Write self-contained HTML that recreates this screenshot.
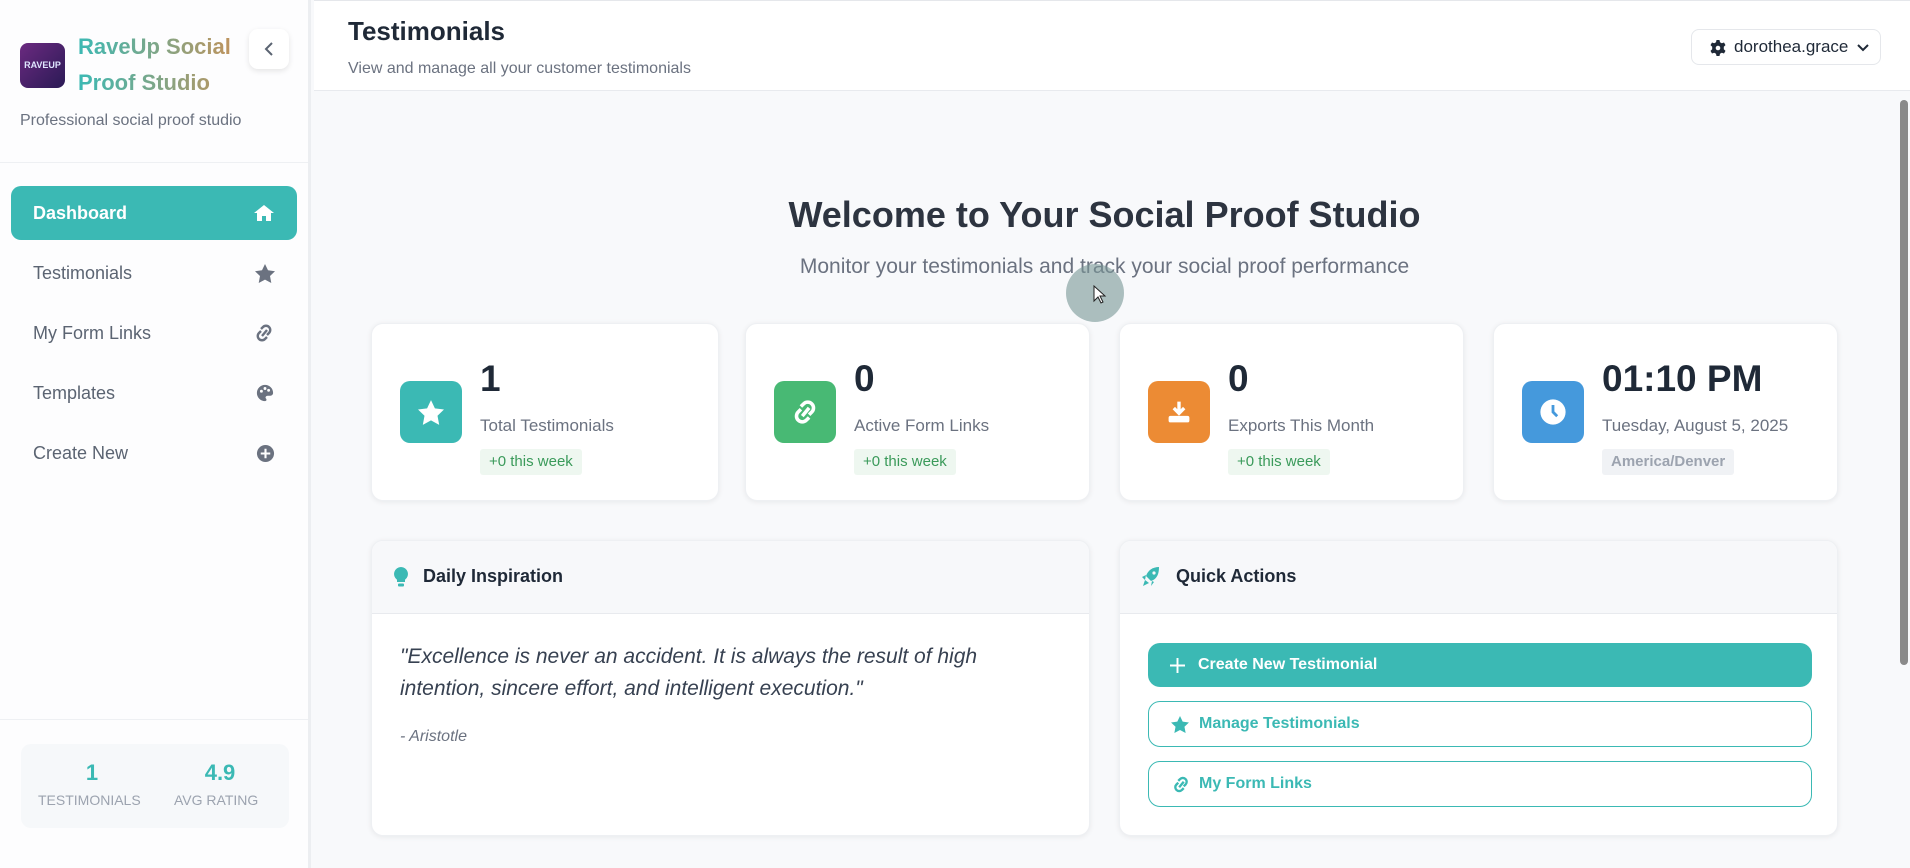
<!DOCTYPE html>
<html><head><meta charset="utf-8"><style>
*{box-sizing:border-box;margin:0;padding:0}
body{width:1910px;height:868px;overflow:hidden;background:#f8f9fb;font-family:"Liberation Sans",sans-serif;position:relative;color:#1f2937}
.a{position:absolute}
.side{left:0;top:0;width:311px;height:868px;background:#fdfdfe;border-right:3px solid #eceef1}
.nav{left:11px;width:286px;height:54px;border-radius:10px;font-size:18px;color:#5b6472;padding-left:22px;line-height:54px}
.nav svg{position:absolute;right:22px;top:18px}
.card{background:#fff;border-radius:12px;box-shadow:0 1px 6px rgba(0,0,0,.07);border:1px solid #eef0f3}
.ib{width:62px;height:62px;border-radius:10px;left:28px;top:57px;display:flex;align-items:center;justify-content:center}
.num{left:108px;top:34px;font-size:37px;font-weight:bold;color:#1f2937}
.lbl{left:108px;top:92px;font-size:17px;color:#6b7280}
.bdg{left:108px;top:125px;height:26px;line-height:26px;padding:0 9px;font-size:15px;color:#3a9a5a;background:#eef7f0;border-radius:3px}
.btn{left:28px;width:664px;border-radius:12px;font-size:16px;font-weight:bold;padding-left:50px;display:flex;align-items:center}
.btn svg{position:absolute;left:22px}
</style></head><body>
<div class="a side">
  <div class="a" style="left:20px;top:43px;width:45px;height:45px;border-radius:8px;background:linear-gradient(135deg,#6b2a80,#2a1a55);color:#dfe6ff;font-size:9px;font-weight:bold;text-align:center;line-height:45px">RAVEUP</div>
  <div class="a" style="left:78px;top:29px;font-size:22px;font-weight:bold;line-height:36px;background:linear-gradient(90deg,#3bb9b4,#c4925a);-webkit-background-clip:text;color:transparent;width:160px">RaveUp Social Proof Studio</div>
  <div class="a" style="left:249px;top:29px;width:40px;height:40px;border-radius:9px;background:#fff;box-shadow:0 2px 6px rgba(0,0,0,.1)"><svg class="a" style="left:13px;top:12px" width="14" height="16" viewBox="0 0 14 16"><path d="M10 2 4 8l6 6" stroke="#5b6472" stroke-width="2" fill="none"/></svg></div>
  <div class="a" style="left:20px;top:112px;font-size:16px;color:#6b7280">Professional social proof studio</div>
  <div class="a" style="left:0;top:162px;width:308px;border-top:1px solid #eef0f3"></div>
  <div class="a nav" style="top:186px;background:#3bb9b4;color:#fff;font-weight:bold"><span>Dashboard</span><svg width="22" height="18" viewBox="0 0 22 18"><path d="M11 1 1 9h3v8h5v-5h4v5h5V9h3z" fill="#fff"/></svg></div>
  <div class="a nav" style="top:246px">Testimonials<svg width="20" height="19" viewBox="0 0 20 19"><path d="M10 0l3 6.3 7 .9-5 4.8 1.3 7L10 15.6 3.7 19 5 12 0 7.2l7-.9z" fill="#6b7280"/></svg></div>
  <div class="a nav" style="top:306px">My Form Links<svg width="22" height="18" viewBox="0 0 22 18"><path d="M9 12l5-6M8 5l2-2a4 4 0 016 6l-2 2M14 13l-2 2a4 4 0 01-6-6l2-2" stroke="#6b7280" stroke-width="2.4" fill="none"/></svg></div>
  <div class="a nav" style="top:366px">Templates<svg width="20" height="18" viewBox="0 0 20 20"><path d="M10 1a9 9 0 000 18c2 0 2-2 1-3s0-3 2-3h3a3 3 0 003-3c0-5-4-9-9-9z" fill="#6b7280"/><circle cx="6" cy="8" r="1.6" fill="#fff"/><circle cx="10" cy="5" r="1.6" fill="#fff"/><circle cx="14" cy="7" r="1.6" fill="#fff"/></svg></div>
  <div class="a nav" style="top:426px">Create New<svg width="19" height="19" viewBox="0 0 20 20"><circle cx="10" cy="10" r="9" fill="#6b7280"/><path d="M10 5v10M5 10h10" stroke="#fff" stroke-width="2.2"/></svg></div>
  <div class="a" style="left:0;top:719px;width:308px;border-top:1px solid #eef0f3"></div>
  <div class="a" style="left:21px;top:744px;width:268px;height:84px;background:#f6f8fa;border-radius:10px"></div>
  <div class="a" style="left:40px;top:760px;width:104px;text-align:center;font-size:22px;font-weight:bold;color:#3bb9b4">1</div>
  <div class="a" style="left:38px;top:792px;font-size:14px;color:#9ca3af">TESTIMONIALS</div>
  <div class="a" style="left:170px;top:760px;width:100px;text-align:center;font-size:22px;font-weight:bold;color:#3bb9b4">4.9</div>
  <div class="a" style="left:174px;top:792px;font-size:14px;color:#9ca3af">AVG RATING</div>
</div>
<div class="a" style="left:314px;top:0;width:1596px;height:91px;background:#fff;border-bottom:1px solid #e8eaee;border-top:1px solid #e5e7eb"></div>
<div class="a" style="left:348px;top:16px;font-size:26px;font-weight:bold;color:#1f2937">Testimonials</div>
<div class="a" style="left:348px;top:60px;font-size:16px;color:#6b7280">View and manage all your customer testimonials</div>
<div class="a" style="left:1691px;top:29px;width:190px;height:36px;border:1px solid #e5e7eb;border-radius:8px;background:#fff;font-size:17px;line-height:34px;padding-left:42px;color:#1f2937">dorothea.grace
<svg class="a" style="left:18px;top:10px" width="16" height="16" viewBox="0 0 16 16"><path d="M6.5 0h3l.5 2.3 1.8 1 2.2-.8 1.5 2.6-1.7 1.6v2.6l1.7 1.6-1.5 2.6-2.2-.8-1.8 1-.5 2.3h-3L6 13.7l-1.8-1-2.2.8L.5 10.9l1.7-1.6V6.7L.5 5.1 2 2.5l2.2.8 1.8-1z" fill="#1f2937"/><circle cx="8" cy="8" r="2.3" fill="#fff"/></svg>
<svg class="a" style="left:164px;top:13px" width="14" height="10" viewBox="0 0 14 10"><path d="M2 2l5 5 5-5" stroke="#1f2937" stroke-width="2" fill="none"/></svg></div>
<div class="a" style="left:1900px;top:100px;width:8px;height:565px;background:#8a8a8a;border-radius:4px"></div>
<div class="a" style="left:371px;top:194px;width:1467px;text-align:center;font-size:36px;font-weight:bold;color:#2d3440">Welcome to Your Social Proof Studio</div>
<div class="a" style="left:371px;top:255px;width:1467px;text-align:center;font-size:21px;color:#6b7280">Monitor your testimonials and track your social proof performance</div>

<div class="a card" style="left:371px;top:323px;width:348px;height:178px">
 <div class="a ib" style="background:#3bb9b4"><svg width="26" height="25" viewBox="0 0 20 19"><path d="M10 0l3 6.3 7 .9-5 4.8 1.3 7L10 15.6 3.7 19 5 12 0 7.2l7-.9z" fill="#fff"/></svg></div>
 <div class="a num">1</div><div class="a lbl">Total Testimonials</div><div class="a bdg">+0 this week</div></div>
<div class="a card" style="left:745px;top:323px;width:345px;height:178px">
 <div class="a ib" style="background:#48b974"><svg width="30" height="26" viewBox="0 0 22 18"><path d="M9 12l5-6M8 5l2-2a4 4 0 016 6l-2 2M14 13l-2 2a4 4 0 01-6-6l2-2" stroke="#fff" stroke-width="2.6" fill="none"/></svg></div>
 <div class="a num">0</div><div class="a lbl">Active Form Links</div><div class="a bdg">+0 this week</div></div>
<div class="a card" style="left:1119px;top:323px;width:345px;height:178px">
 <div class="a ib" style="background:#ec8b34"><svg width="26" height="26" viewBox="0 0 20 20"><path d="M10 2v9M6 7l4 4 4-4" stroke="#fff" stroke-width="2.6" fill="none"/><rect x="2" y="13" width="16" height="5" rx="1.5" fill="#fff"/></svg></div>
 <div class="a num">0</div><div class="a lbl">Exports This Month</div><div class="a bdg">+0 this week</div></div>
<div class="a card" style="left:1493px;top:323px;width:345px;height:178px">
 <div class="a ib" style="background:#4599dc"><svg width="28" height="28" viewBox="0 0 20 20"><circle cx="10" cy="10" r="9" fill="#fff"/><path d="M10 5v5l3 3" stroke="#4599dc" stroke-width="2" fill="none"/></svg></div>
 <div class="a num">01:10 PM</div><div class="a lbl">Tuesday, August 5, 2025</div><div class="a bdg" style="color:#9ca3af;background:#f0f2f5;font-weight:bold">America/Denver</div></div>

<div class="a card" style="left:371px;top:540px;width:719px;height:296px;overflow:hidden">
 <div class="a" style="left:0;top:0;width:100%;height:73px;background:#f7f8fa;border-bottom:1px solid #e8eaee"></div>
 <svg class="a" style="left:22px;top:26px" width="14" height="21" viewBox="0 0 14 21"><path d="M7 0a7 7 0 00-4 12.7V15h8v-2.3A7 7 0 007 0z" fill="#3bb9b4"/><rect x="4" y="16.5" width="6" height="3" rx="1" fill="#3bb9b4"/></svg>
 <div class="a" style="left:51px;top:25px;font-size:18px;font-weight:bold;color:#1f2937">Daily Inspiration</div>
 <div class="a" style="left:28px;top:100px;width:660px;font-size:21px;font-style:italic;line-height:32px;color:#374151">"Excellence is never an accident. It is always the result of high intention, sincere effort, and intelligent execution."</div>
 <div class="a" style="left:28px;top:187px;font-size:16px;font-style:italic;color:#6b7280">- Aristotle</div>
</div>
<div class="a card" style="left:1119px;top:540px;width:719px;height:296px;overflow:hidden">
 <div class="a" style="left:0;top:0;width:100%;height:73px;background:#f7f8fa;border-bottom:1px solid #e8eaee"></div>
 <svg class="a" style="left:22px;top:26px" width="18" height="20" viewBox="0 0 18 20"><path d="M17 0C11 0 6 3 4 9l5 5c6-2 8-7 8-14z" fill="#3bb9b4"/><path d="M4 8L0 10l3 3zM10 14l-1 5 3-4zM3 13l-2 6 6-3z" fill="#3bb9b4"/><circle cx="12" cy="6" r="1.6" fill="#f7f8fa"/></svg>
 <div class="a" style="left:56px;top:25px;font-size:18px;font-weight:bold;color:#1f2937">Quick Actions</div>
 <div class="a btn" style="top:102px;height:44px;background:#3bb9b4;color:#fff"><svg width="15" height="15" viewBox="0 0 14 14"><path d="M7 0v14M0 7h14" stroke="#fff" stroke-width="1.8"/></svg>Create New Testimonial</div>
 <div class="a btn" style="top:160px;height:46px;border:1.5px solid #3bb9b4;color:#3bb9b4"><svg width="18" height="17" viewBox="0 0 20 19"><path d="M10 0l3 6.3 7 .9-5 4.8 1.3 7L10 15.6 3.7 19 5 12 0 7.2l7-.9z" fill="#3bb9b4"/></svg>Manage Testimonials</div>
 <div class="a btn" style="top:220px;height:46px;border:1.5px solid #3bb9b4;color:#3bb9b4"><svg width="20" height="17" viewBox="0 0 22 18"><path d="M9 12l5-6M8 5l2-2a4 4 0 016 6l-2 2M14 13l-2 2a4 4 0 01-6-6l2-2" stroke="#3bb9b4" stroke-width="2.6" fill="none"/></svg>My Form Links</div>
</div>
<div class="a" style="left:1066px;top:264px;width:58px;height:58px;border-radius:50%;background:rgba(120,150,150,.6)"></div>
<svg class="a" style="left:1093px;top:285px" width="14" height="20" viewBox="0 0 14 20"><path d="M1 1v15l4-4 3 6 2-1-3-6h5z" fill="#fff" stroke="#222" stroke-width="1"/></svg>
</body></html>
